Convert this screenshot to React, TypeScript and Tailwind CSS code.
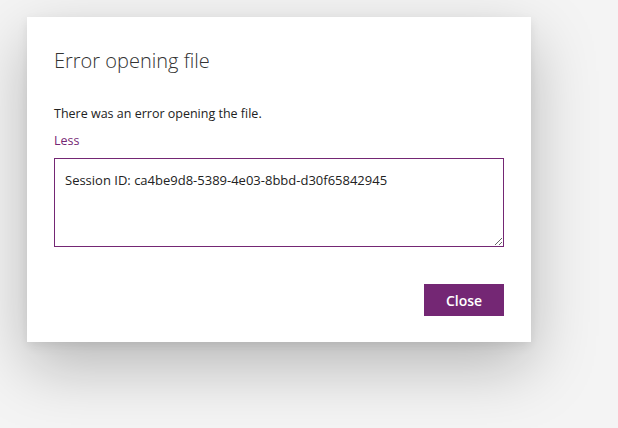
import { useState } from "react";

export default function App() {
  const [expanded, setExpanded] = useState(true);

  return (
    <div
      className="min-h-[428px] w-[618px] bg-[#f4f4f4] pt-[17px] pl-[27px]"
      style={{ fontFamily: '"Open Sans", "Noto Sans", sans-serif' }}
    >
      <div className="flex w-[504px] flex-col bg-white px-[27px] pt-[30px] pb-[26px] shadow-[0_24px_60px_rgba(0,0,0,0.25),0_4px_10px_rgba(0,0,0,0.08)]">
        <h2 className="text-[20px] leading-[28px] font-light text-[#333333]">
          Error opening file
        </h2>
        <p className="mt-[30px] text-[12.5px] leading-[18px] text-[#222222]">
          There was an error opening the file.
        </p>
        <button
          type="button"
          onClick={() => setExpanded(!expanded)}
          className="mt-[9px] self-start text-[12.5px] leading-[18px] text-[#742774]"
        >
          {expanded ? "Less" : "More"}
        </button>
        {expanded && (
          <textarea
            readOnly
            defaultValue="Session ID: ca4be9d8-5389-4e03-8bbd-d30f65842945"
            className="mt-[8px] block h-[89px] w-[450px] resize-y border border-[#742774] px-[10px] py-[12px] text-[13px] leading-[18px] text-[#222222] outline-none"
          />
        )}
        <div className="mt-[37px] flex justify-end">
          <button
            type="button"
            className="h-[32px] w-[80px] bg-[#742774] text-[14px] font-semibold text-white"
          >
            Close
          </button>
        </div>
      </div>
    </div>
  );
}
